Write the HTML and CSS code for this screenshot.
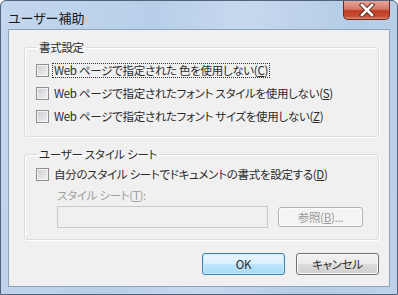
FILE: index.html
```html
<!DOCTYPE html>
<html lang="ja">
<head>
    <meta charset="UTF-8">
    <title>ユーザー補助</title>
    <link rel="stylesheet" href="styles.css">
</head>
<body>
    <div class="window">
        <div class="titlebar">
            <span class="title">ユーザー補助</span>
            <div class="close">
                <svg width="16" height="14" viewBox="0 0 16 14">
                    <path d="M3 2 L13 12 M13 2 L3 12" stroke="#5a2a22" stroke-width="4.5" stroke-linecap="square"/>
                    <path d="M3 2 L13 12 M13 2 L3 12" stroke="#ffffff" stroke-width="2.6" stroke-linecap="square"/>
                </svg>
            </div>
        </div>
        <div class="client">
            <fieldset class="group first">
                <legend>書式設定</legend>
                <label class="check"><span class="box"></span><span class="text focus">Web ページで指定された 色を使用しない(<u>C</u>)</span></label>
                <label class="check"><span class="box"></span><span class="text">Web ページで指定されたフォント スタイルを使用しない(<u>S</u>)</span></label>
                <label class="check"><span class="box"></span><span class="text">Web ページで指定されたフォント サイズを使用しない(<u>Z</u>)</span></label>
            </fieldset>
            <fieldset class="group second">
                <legend>ユーザー スタイル シート</legend>
                <label class="check"><span class="box"></span><span class="text">自分のスタイル シートでドキュメントの書式を設定する(<u>D</u>)</span></label>
                <div class="sheet-label">スタイル シート(<u>T</u>):</div>
                <div class="sheet-row">
                    <div class="textbox"></div>
                    <div class="btn disabled">参照(<u>B</u>)...</div>
                </div>
            </fieldset>
            <div class="actions">
                <div class="btn default">OK</div>
                <div class="btn">キャンセル</div>
            </div>
        </div>
    </div>
</body>
</html>
```

FILE: styles.css
```css
body{
    margin: 0;
    background-color: #ffffff;
    font-family: "Noto Sans CJK JP", "Noto Sans", sans-serif;
    font-size: 11.5px;
    letter-spacing: -0.3px;
    font-feature-settings: "palt";
    color: #2a2a2a;
}

.window{
  width: 398px;
  height: 295px;
  box-sizing: border-box;
  border: 1px solid #50637a;
  border-radius: 6px 6px 0 0;
  background: linear-gradient(100deg, #c3d7ee 0%, #b7cfe9 35%, #c6d9ee 55%, #b4cce6 80%, #bdd3ea 100%);
  padding: 0 7px 7px 7px;
  display: flex;
  flex-direction: column;
}

.titlebar{
  height: 28px;
  display: flex;
  justify-content: space-between;
  align-items: flex-start;
}

.title{
  margin-top: 7px;
  font-size: 13px;
  letter-spacing: 0;
  color: #1a1a1a;
}

.close{
  width: 47px;
  height: 19px;
  box-sizing: border-box;
  border: 1px solid #6d2a20;
  border-top: none;
  border-radius: 0 0 5px 5px;
  background: linear-gradient(#e6a597 0%, #d77a66 45%, #c03c22 55%, #c64f33 85%, #dc8a6e 100%);
  display: flex;
  justify-content: center;
  align-items: center;
}

.client{
  flex: 1;
  background-color: #f0f0f0;
  border: 1px solid #8da3bc;
  padding: 10px 10px 0 15px;
  display: flex;
  flex-direction: column;
}

.group{
  margin: 0;
  padding: 2px 0 0 11px;
  border: 1px solid #d5dfe5;
  border-radius: 3px;
  box-shadow: inset 1px 1px 0 #ffffff, 1px 1px 0 #ffffff;
}

.group legend{
  padding: 0 2px;
  margin-left: 1px;
  line-height: 14px;
}

.first{
  height: 90px;
  padding-top: 5px;
}

.second{
  margin-top: 10px;
  height: 89px;
}

.check{
  display: flex;
  align-items: center;
  height: 23px;
}

.box{
  width: 13px;
  height: 13px;
  box-sizing: border-box;
  border: 1px solid #8e8f8f;
  background: linear-gradient(135deg, #c8ccd1 0%, #e2e3e5 60%, #f2f2f2 100%);
  box-shadow: inset 0 0 0 1px #f4f4f4;
  margin-right: 3px;
}

.text{
  padding: 0 1px;
  border: 1px solid transparent;
  line-height: 13px;
}

.focus{
  border: 1px dotted #333333;
}

u{
  text-decoration: underline;
}

.sheet-label{
  margin: 2px 0 0 21px;
  color: #a0a0a0;
  line-height: 14px;
}

.sheet-row{
  display: flex;
  align-items: flex-start;
  margin: 4px 0 0 21px;
  gap: 10px;
}

.textbox{
  width: 211px;
  height: 22px;
  box-sizing: border-box;
  border: 1px solid #c7cbce;
  background-color: #f0f0f0;
}

.btn{
  width: 83px;
  height: 22px;
  box-sizing: border-box;
  border: 1px solid #707070;
  border-radius: 3px;
  background: linear-gradient(#f2f2f2 0%, #ebebeb 49%, #dddddd 51%, #cfcfcf 100%);
  box-shadow: inset 0 0 0 1px #fbfbfb;
  display: flex;
  justify-content: center;
  align-items: center;
}

.disabled{
  width: 85px;
  height: 20px;
  margin-top: 1px;
  border-color: #adb2b5;
  background: #f4f4f4;
  color: #9a9a9a;
}

.default{
  border-color: #3c7fb1;
  background: linear-gradient(#eaf6fd 0%, #d9f0fc 49%, #bee6fd 51%, #a7d9f5 100%);
  box-shadow: inset 0 0 0 1px #cdecfb;
}

.actions{
  display: flex;
  justify-content: flex-end;
  gap: 11px;
  margin-top: 13px;
}
```
